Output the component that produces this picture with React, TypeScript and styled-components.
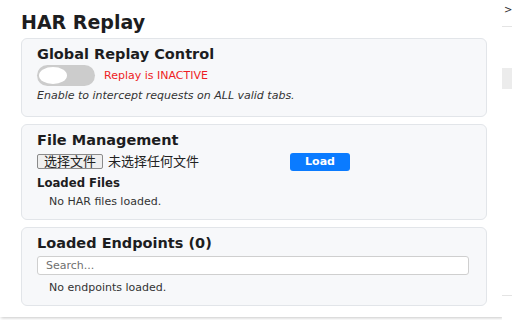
// External Dependencies
import React from 'react';
import styled, { createGlobalStyle } from 'styled-components';

// Local Variables
const GlobalStyle = createGlobalStyle`
  html, body {
    margin: 0;
    padding: 0;
    background: #ffffff;
    font-family: "DejaVu Sans", "Noto Sans CJK SC", sans-serif;
    color: #222222;
  }
`;

const Page = styled.div`
  display: flex;
  width: 512px;
  height: 320px;
  overflow: hidden;
`;

const Popup = styled.main`
  box-sizing: border-box;
  display: flex;
  flex-direction: column;
  flex: 0 0 502px;
  height: 317px;
  padding: 11px 15px 0 21px;
  background: #ffffff;
  box-shadow: 1px 1px 3px rgba(0, 0, 0, 0.22);
`;

const Title = styled.h1`
  margin: 0;
  font-size: 19px;
  line-height: 22px;
  font-weight: 700;
  color: #1d1d1f;
`;

const Card = styled.section<{ $gap?: number }>`
  box-sizing: border-box;
  display: flex;
  flex-direction: column;
  width: 466px;
  margin-top: ${({ $gap }) => $gap ?? 7}px;
  padding: 6px 15px 10px;
  background: #f7f8fa;
  border: 1px solid #e2e5e9;
  border-radius: 6px;
`;

const CardTitle = styled.h2`
  margin: 0;
  font-size: 14.5px;
  line-height: 18px;
  font-weight: 700;
  color: #1d1d1f;
`;

const ToggleRow = styled.div`
  display: flex;
  align-items: center;
  gap: 9px;
  margin-top: 2px;
`;

const Toggle = styled.span<{ $on?: boolean }>`
  box-sizing: border-box;
  display: flex;
  align-items: center;
  justify-content: ${({ $on }) => ($on ? 'flex-end' : 'flex-start')};
  width: 58px;
  height: 21px;
  padding: 0 2px;
  border-radius: 11px;
  background: ${({ $on }) => ($on ? '#007bff' : '#cccccc')};
`;

const Knob = styled.span`
  width: 28px;
  height: 17px;
  border-radius: 50%;
  background: #ffffff;
`;

const Status = styled.span<{ $active?: boolean }>`
  font-size: 11px;
  line-height: 14px;
  color: ${({ $active }) => ($active ? '#1e9e3e' : '#ee1c24')};
`;

const Hint = styled.p`
  margin: 3px 0 3px;
  font-size: 11px;
  line-height: 14px;
  font-style: italic;
  color: #333333;
`;

const FileRow = styled.div`
  display: flex;
  align-items: flex-start;
  gap: 4px;
  margin-top: 4px;
`;

const FilePicker = styled.label`
  display: flex;
  align-items: center;
  gap: 5px;
  width: 249px;
  padding-top: 1px;
  font-size: 13px;
  line-height: 13px;
  color: #222222;
`;

const PickButton = styled.span`
  padding: 0 6px;
  background: #efefef;
  border: 1px solid #8a8a8a;
  border-radius: 2px;
`;

const LoadButton = styled.button`
  width: 60px;
  height: 18px;
  padding: 0;
  border: none;
  border-radius: 3px;
  background: #0a7bff;
  color: #ffffff;
  font-family: inherit;
  font-size: 11px;
  font-weight: 700;
  line-height: 18px;
`;

const SubTitle = styled.h3`
  margin: 5px 0 0;
  font-size: 11.7px;
  line-height: 15px;
  font-weight: 700;
  color: #1d1d1f;
`;

const EmptyText = styled.p<{ $top?: number }>`
  margin: ${({ $top }) => $top ?? 4}px 0 0 12px;
  font-size: 11px;
  line-height: 14px;
  color: #333333;
`;

const SearchInput = styled.input`
  box-sizing: border-box;
  width: 432px;
  height: 19px;
  margin-top: 4px;
  padding: 0 8px;
  background: #ffffff;
  border: 1px solid #cfcfcf;
  border-radius: 3px;
  font-family: inherit;
  font-size: 11px;
  color: #222222;

  &::placeholder {
    color: #6f6f6f;
  }
`;

const Backdrop = styled.aside`
  display: flex;
  flex-direction: column;
  flex: 1;
  padding-top: 4px;
  background: #ffffff;
`;

const Chevron = styled.span`
  padding-left: 2px;
  font-size: 10px;
  line-height: 12px;
  color: #333333;
`;

const Rule = styled.div<{ $top: number }>`
  height: 1px;
  margin-top: ${({ $top }) => $top}px;
  background: #e4e4e4;
`;

const Block = styled.div`
  height: 21px;
  margin-top: 41px;
  background: #ececec;
`;

// Component Definition
const App: React.FC = () => {
  return (
    <>
      <GlobalStyle />
      <Page>
        <Popup>
          <Title>HAR Replay</Title>

          <Card $gap={5}>
            <CardTitle>Global Replay Control</CardTitle>

            <ToggleRow>
              <Toggle>
                <Knob />
              </Toggle>
              <Status>Replay is INACTIVE</Status>
            </ToggleRow>

            <Hint>Enable to intercept requests on ALL valid tabs.</Hint>
          </Card>

          <Card>
            <CardTitle>File Management</CardTitle>

            <FileRow>
              <FilePicker>
                <PickButton>选择文件</PickButton>
                未选择任何文件
              </FilePicker>
              <LoadButton type="button">Load</LoadButton>
            </FileRow>

            <SubTitle>Loaded Files</SubTitle>
            <EmptyText>No HAR files loaded.</EmptyText>
          </Card>

          <Card>
            <CardTitle>Loaded Endpoints (0)</CardTitle>
            <SearchInput placeholder="Search..." />
            <EmptyText $top={6}>No endpoints loaded.</EmptyText>
          </Card>
        </Popup>

        <Backdrop>
          <Chevron>&gt;</Chevron>
          <Rule $top={10} />
          <Block />
          <Rule $top={206} />
        </Backdrop>
      </Page>
    </>
  );
};

export default App;
